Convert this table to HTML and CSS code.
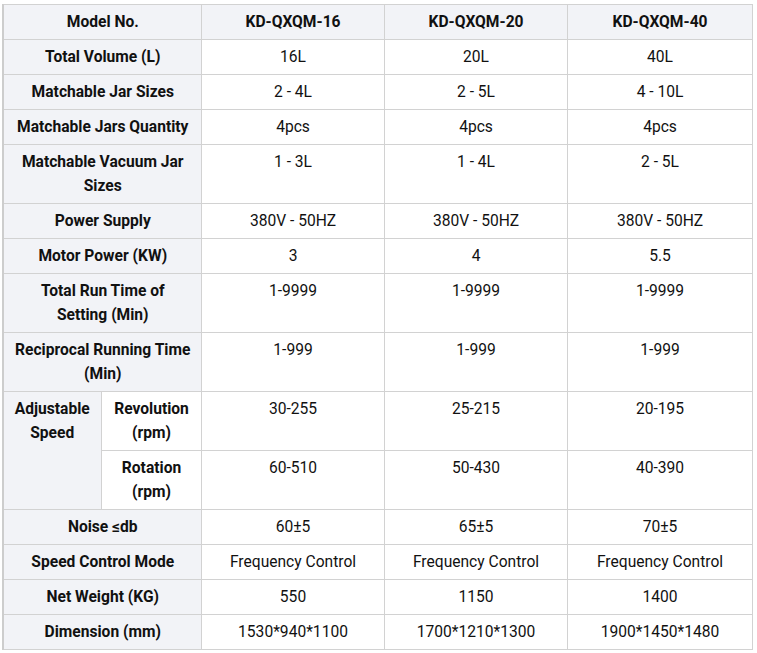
FILE: index.html
```html
<!DOCTYPE html>
<html>
<head>
<meta charset="utf-8">
<link rel="stylesheet" href="styles.css">
</head>
<body>
<div class="wrap">
<table class="spec">
  <colgroup>
    <col class="c-sub1"><col class="c-sub2"><col class="c-val"><col class="c-val"><col class="c-val4">
  </colgroup>
  <thead>
    <tr><th colspan="2">Model No.</th><th>KD-QXQM-16</th><th>KD-QXQM-20</th><th>KD-QXQM-40</th></tr>
  </thead>
  <tbody>
    <tr><th colspan="2">Total Volume (L)</th><td>16L</td><td>20L</td><td>40L</td></tr>
    <tr><th colspan="2">Matchable Jar Sizes</th><td>2 - 4L</td><td>2 - 5L</td><td>4 - 10L</td></tr>
    <tr><th colspan="2">Matchable Jars Quantity</th><td>4pcs</td><td>4pcs</td><td>4pcs</td></tr>
    <tr><th colspan="2">Matchable Vacuum Jar Sizes</th><td>1 - 3L</td><td>1 - 4L</td><td>2 - 5L</td></tr>
    <tr><th colspan="2">Power Supply</th><td>380V - 50HZ</td><td>380V - 50HZ</td><td>380V - 50HZ</td></tr>
    <tr><th colspan="2">Motor Power (KW)</th><td>3</td><td>4</td><td>5.5</td></tr>
    <tr><th colspan="2">Total Run Time of Setting (Min)</th><td>1-9999</td><td>1-9999</td><td>1-9999</td></tr>
    <tr><th colspan="2">Reciprocal Running Time (Min)</th><td>1-999</td><td>1-999</td><td>1-999</td></tr>
    <tr><th rowspan="2" class="top">Adjustable Speed</th><td class="sub">Revolution (rpm)</td><td>30-255</td><td>25-215</td><td>20-195</td></tr>
    <tr><td class="sub">Rotation (rpm)</td><td>60-510</td><td>50-430</td><td>40-390</td></tr>
    <tr><th colspan="2">Noise ≤db</th><td>60±5</td><td>65±5</td><td>70±5</td></tr>
    <tr><th colspan="2">Speed Control Mode</th><td>Frequency Control</td><td>Frequency Control</td><td>Frequency Control</td></tr>
    <tr><th colspan="2">Net Weight (KG)</th><td>550</td><td>1150</td><td>1400</td></tr>
    <tr><th colspan="2">Dimension (mm)</th><td>1530*940*1100</td><td>1700*1210*1300</td><td>1900*1450*1480</td></tr>
  </tbody>
</table>
</div>
</body>
</html>
```
FILE: styles.css
```css
html, body {
  margin: 0;
  padding: 0;
  background: #ffffff;
}
.wrap {
  padding: 4px 0 0 2px;
}
.spec {
  border-collapse: collapse;
  table-layout: fixed;
  width: 750px;
  font-family: Roboto, "Liberation Sans", Arial, sans-serif;
  font-size: 15.6px;
  line-height: 24px;
  color: #111111;
  border-left: 2px solid #cdcdcd;
}
.c-sub1 { width: 98px; }
.c-sub2 { width: 100px; }
.c-val { width: 183px; }
.c-val4 { width: 185px; }
.spec th, .spec td {
  border: 1px solid #d2d2d2;
  padding: 5px 10px 5px 11px;
  text-align: center;
  vertical-align: middle;
}
.spec td {
  vertical-align: top;
  font-weight: 400;
}
.spec thead th {
  background: #f2f3f7;
  font-weight: 700;
}
.spec tbody th {
  background: #f2f3f7;
  font-weight: 700;
}
.spec tbody th.top {
  vertical-align: top;
  padding-left: 4px;
  padding-right: 4px;
}
.spec td.sub {
  font-weight: 700;
  vertical-align: top;
}
```
